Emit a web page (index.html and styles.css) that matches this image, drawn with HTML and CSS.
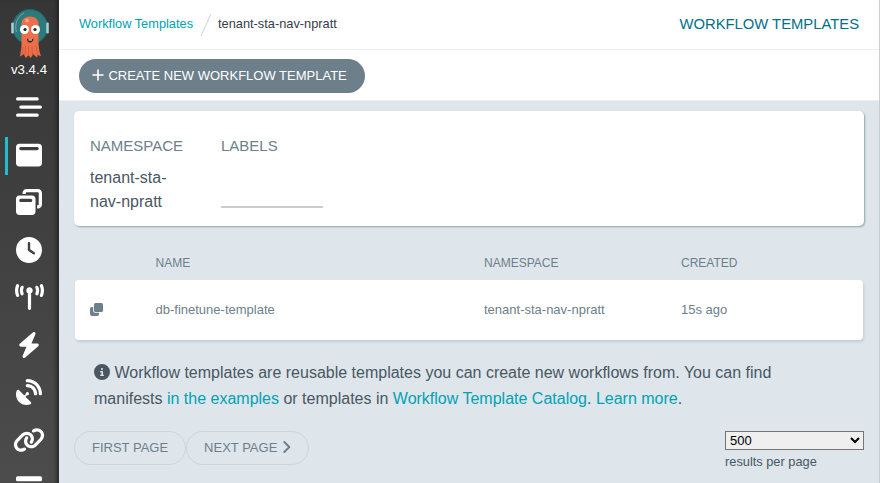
FILE: index.html
```html
<!DOCTYPE html>
<html lang="en">
<head>
<meta charset="utf-8">
<title>Workflow Templates</title>
<link rel="stylesheet" href="styles.css">
</head>
<body>
<div class="layout">
  <nav class="nav">
    <div class="brand">
      <svg class="logo" viewBox="0 0 40 52">
        <circle cx="20" cy="19" r="17.500" fill="#2c7a7c" stroke="#206569"/>
        <rect x="1.200" y="14.500" width="2.600" height="11" rx="1" fill="#a9cbd8"/>
        <rect x="36.200" y="14.500" width="2.600" height="11" rx="1" fill="#a9cbd8"/>
        <path d="M6.500 24C4 16 8 8 14 5" fill="none" stroke="#6ba6a6" stroke-width="1"/>
        <path d="M11.500 20C10.500 12 14 8.500 20 8.500S29.500 12 28.500 20L28.500 36C29 42 29.500 44 31 47.500C29.500 48 28 47.500 27.500 46L27.500 49.500L25 48L23.500 46L20.500 50L18.500 47L16 50L14.500 48L14 46L10 48.500C10.500 44 11.500 41 11.500 36Z" fill="#ec6f4a"/>
        <path d="M13 39L12 46M15.500 38L15 47M18.500 38V48M22 38L22.500 47M26 37L27 46" stroke="#c9583a" stroke-width=".7"/>
        <circle cx="17" cy="12.500" r="2" fill="#f7a184"/>
        <circle cx="14.500" cy="21.500" r="4.500" fill="#fff"/><circle cx="25.500" cy="21.500" r="4.500" fill="#fff"/>
        <circle cx="15" cy="21.500" r="1.600" fill="#222"/><circle cx="25" cy="21.500" r="1.600" fill="#222"/>
        <path d="M17 30.500Q20 32.500 23.500 30.500Q23 34.500 20 34.500T17 30.500Z" fill="#3b1c1a"/>
        <path d="M18.500 31.500H22V32.500H18.500Z" fill="#fff"/>
      </svg>
      <div class="version">v3.4.4</div>
    </div>
    <div class="nav-item"><svg class="icon" viewBox="0 0 512 512"><path d="M32 96H416M96 256H480M32 416H416" fill="none" stroke="#fff" stroke-width="64" stroke-linecap="round"/></svg></div>
    <div class="nav-item active"><svg class="icon" viewBox="0 0 512 512"><path d="M64 32C28.700 32 0 60.700 0 96V416c0 35.300 28.700 64 64 64H448c35.300 0 64-28.700 64-64V96c0-35.300-28.700-64-64-64H64zM96 96H416c17.700 0 32 14.300 32 32s-14.300 32-32 32H96c-17.700 0-32-14.300-32-32s14.300-32 32-32z" fill-rule="evenodd"/></svg></div>
    <div class="nav-item"><svg class="icon" viewBox="0 0 512 512"><path fill-rule="evenodd" d="M432 64H208c-8.800 0-16 7.200-16 16V96H128V80c0-44.200 35.800-80 80-80H432c44.200 0 80 35.800 80 80V304c0 44.200-35.800 80-80 80H416V320h16c8.800 0 16-7.200 16-16V80c0-8.800-7.200-16-16-16zM0 192c0-35.300 28.700-64 64-64H320c35.300 0 64 28.700 64 64V448c0 35.300-28.700 64-64 64H64c-35.300 0-64-28.700-64-64V192zm64 32c0 17.700 14.300 32 32 32H288c17.700 0 32-14.300 32-32s-14.300-32-32-32H96c-17.700 0-32 14.300-32 32z"/></svg></div>
    <div class="nav-item"><svg class="icon" viewBox="0 0 512 512"><path fill-rule="evenodd" d="M256 0a256 256 0 1 1 0 512A256 256 0 1 1 256 0zM232 120V256c0 8 4 15.500 10.700 20l96 64c11 7.400 25.900 4.400 33.300-6.700s4.400-25.900-6.700-33.300L280 243.200V120c0-13.300-10.700-24-24-24s-24 10.700-24 24z"/></svg></div>
    <div class="nav-item"><svg class="icon wide" viewBox="0 0 576 512"><path d="M80.300 44C69.800 69.900 64 98.200 64 128s5.800 58.100 16.300 84c6.600 16.400-1.300 35-17.700 41.700s-35-1.300-41.700-17.700C7.400 202.600 0 166.100 0 128S7.400 53.400 20.900 20C27.600 3.600 46.200-4.300 62.600 2.300S86.900 27.600 80.300 44zM555.100 20C568.600 53.400 576 89.900 576 128s-7.400 74.600-20.900 108c-6.600 16.400-25.300 24.300-41.700 17.700S489.100 228.400 495.700 212c10.500-25.900 16.300-54.200 16.300-84s-5.800-58.100-16.300-84C489.100 27.600 497 9 513.400 2.300s35 1.300 41.700 17.700zM352 128c0 23.700-12.900 44.400-32 55.400V480c0 17.700-14.300 32-32 32s-32-14.300-32-32V183.400c-19.100-11.100-32-31.700-32-55.400c0-35.300 28.700-64 64-64s64 28.700 64 64zM170.600 76.800C163.800 92.400 160 109.700 160 128s3.800 35.600 10.600 51.200c7.100 16.200-.3 35.100-16.500 42.100s-35.100-.3-42.100-16.500c-10.300-23.600-16-49.600-16-76.800s5.700-53.200 16-76.800c7.100-16.200 25.900-23.600 42.100-16.500s23.600 25.900 16.500 42.100zM464 51.200c10.300 23.600 16 49.600 16 76.800s-5.700 53.200-16 76.800c-7.100 16.200-25.900 23.600-42.100 16.500s-23.600-25.900-16.500-42.100c6.800-15.600 10.600-32.900 10.600-51.200s-3.800-35.600-10.600-51.200c-7.100-16.200 .3-35.100 16.500-42.100s35.100 .3 42.100 16.500z"/></svg></div>
    <div class="nav-item"><svg class="icon" viewBox="-32 0 512 512"><path d="M349.400 44.600c5.900-13.700 1.500-29.700-10.600-38.500s-28.600-8-39.900 1.800l-256 224c-10 8.800-13.600 22.900-8.900 35.300S50.700 288 64 288H175.500L98.600 467.400c-5.900 13.700-1.500 29.700 10.600 38.500s28.600 8 39.900-1.800l256-224c10-8.800 13.600-22.900 8.900-35.300s-16.600-20.700-30-20.700H272.500L349.400 44.600z"/></svg></div>
    <div class="nav-item"><svg class="icon" viewBox="0 0 512 512"><path d="M192 32c0-17.700 14.300-32 32-32C383.100 0 512 128.900 512 288c0 17.700-14.300 32-32 32s-32-14.300-32-32C448 164.300 347.700 64 224 64c-17.700 0-32-14.300-32-32zM60.600 220.600L164.700 324.700l28.400-28.400c-.7-2.600-1.100-5.400-1.100-8.300c0-17.700 14.300-32 32-32s32 14.300 32 32s-14.300 32-32 32c-2.900 0-5.600-.4-8.300-1.100l-28.400 28.400L291.400 451.400c14.500 14.500 11.800 38.800-7.300 46.300C260.500 506.900 234.900 512 208 512C93.100 512 0 418.900 0 304c0-26.900 5.100-52.500 14.400-76.100c7.500-19 31.800-21.800 46.300-7.300zM224 96c106 0 192 86 192 192c0 17.700-14.300 32-32 32s-32-14.300-32-32c0-70.700-57.300-128-128-128c-17.700 0-32-14.300-32-32s14.300-32 32-32z"/></svg></div>
    <div class="nav-item"><svg class="icon wider" viewBox="0 0 640 512"><path d="M579.800 267.700c56.500-56.500 56.500-148 0-204.500c-50-50-128.800-56.500-186.300-15.400l-1.600 1.100c-14.400 10.300-17.700 30.300-7.400 44.600s30.300 17.700 44.600 7.400l1.600-1.100c32.100-22.900 76-19.300 103.800 8.600c31.500 31.500 31.500 82.500 0 114L422.300 334.800c-31.500 31.500-82.500 31.500-114 0c-27.900-27.900-31.500-71.800-8.600-103.800l1.100-1.600c10.300-14.400 6.900-34.400-7.400-44.600s-34.400-6.900-44.600 7.400l-1.100 1.600C206.500 251.200 213 330 263 380c56.500 56.500 148 56.500 204.500 0L579.800 267.700zM60.200 244.300c-56.500 56.500-56.500 148 0 204.500c50 50 128.800 56.500 186.300 15.400l1.600-1.100c14.400-10.300 17.700-30.300 7.400-44.600s-30.300-17.700-44.600-7.400l-1.600 1.100c-32.100 22.900-76 19.300-103.800-8.600C74 372 74 321 105.500 289.500L217.700 177.200c31.500-31.500 82.500-31.500 114 0c27.900 27.900 31.500 71.800 8.600 103.900l-1.100 1.600c-10.300 14.400-6.900 34.400 7.400 44.600s34.400 6.900 44.600-7.400l1.100-1.600C433.500 260.800 427 182 377 132c-56.500-56.500-148-56.500-204.500 0L60.200 244.300z"/></svg></div>
    <div class="nav-item"><svg class="icon" viewBox="0 0 26 26"><rect y="2.200" width="26" height="5" rx="1.500"/></svg></div>
  </nav>

  <main class="page">
    <header class="topbar">
      <div class="crumbs">
        <a>Workflow Templates</a>
        <svg class="slash" viewBox="0 0 12 24"><path d="M1 23L11 1" stroke="#cbd3da" fill="none"/></svg>
        <span>tenant-sta-nav-npratt</span>
      </div>
      <div class="title">WORKFLOW TEMPLATES</div>
    </header>
    <div class="actions">
      <button class="create"><svg class="plus" viewBox="0 0 12 12"><path d="M6 1V11M1 6H11" stroke="#fff" stroke-width="1.600" stroke-linecap="round"/></svg>CREATE NEW WORKFLOW TEMPLATE</button>
    </div>

    <div class="content">
      <section class="filters">
        <div class="filter"><p class="label">NAMESPACE</p><div class="value">tenant-sta-nav-npratt</div></div>
        <div class="filter"><p class="label">LABELS</p><div class="input"></div></div>
      </section>

      <section class="table">
        <div class="row head"><span></span><span>NAME</span><span>NAMESPACE</span><span>CREATED</span></div>
        <div class="row item">
          <span class="cell-icon"><svg class="clone" viewBox="0 0 13 13"><path d="M3.200 4H2A2 2 0 0 0 0 6v5a2 2 0 0 0 2 2h5a2 2 0 0 0 2-2V9.800H5.200a2 2 0 0 1-2-2Z"/><rect x="4" width="9" height="9" rx="1.600"/></svg></span>
          <span>db-finetune-template</span><span>tenant-sta-nav-npratt</span><span>15s ago</span>
        </div>
      </section>

      <p class="hint"><svg class="info" viewBox="0 0 512 512"><path fill-rule="evenodd" d="M256 512A256 256 0 1 0 256 0a256 256 0 1 0 0 512zM216 336h24V272H216c-13.300 0-24-10.700-24-24s10.700-24 24-24h48c13.300 0 24 10.700 24 24v88h8c13.300 0 24 10.700 24 24s-10.700 24-24 24H216c-13.300 0-24-10.700-24-24s10.700-24 24-24zm40-208a32 32 0 1 1 0 64 32 32 0 1 1 0-64z"/></svg> Workflow templates are reusable templates you can create new workflows from. You can find manifests <a>in the examples</a> or templates in <a>Workflow Template Catalog</a>. <a>Learn more</a>.</p>

      <footer class="pager">
        <div class="pages">
          <button class="outline">FIRST PAGE</button><button class="outline">NEXT PAGE<svg class="chevron" viewBox="0 0 8 12"><path d="M1.300 1L6.300 6L1.300 11" fill="none" stroke="#6d7f8b" stroke-width="1.900" stroke-linecap="round" stroke-linejoin="round"/></svg></button>
        </div>
        <div class="limit"><select><option>500</option></select><div>results per page</div></div>
      </footer>
    </div>
  </main>
</div>
</body>
</html>
```
FILE: styles.css
```css
* { box-sizing: border-box; }
body { margin: 0; height: 483px; overflow: hidden; background: #dee6eb; color: #495763; font-family: "Liberation Sans", Arial, sans-serif; font-size: 16px; }
a { color: #00a2b3; }
p { margin: 0; }
button { font-family: inherit; }
.layout { display: flex; height: 483px; overflow: hidden; }

.nav { flex: none; width: 59px; height: 483px; overflow: hidden; background: linear-gradient(#363636, #4c4c4c); box-shadow: inset -5px 0 4px -3px #222; }
.brand { height: 83.5px; padding-top: 8px; text-align: center; }
.logo { display: block; width: 40px; height: 52px; margin: 0 auto; }
.version { color: #fff; font-size: 13.3px; line-height: 16px; margin-top: 2px; padding-right: 1px; }
.nav-item { display: flex; align-items: center; justify-content: center; height: 47.5px; padding-right: 1px; position: relative; }
.icon { width: 26px; height: 26px; fill: #fff; flex: none; }
.icon.wide { width: 29px; }
.icon.wider { width: 32px; }
.nav-item.active::before { content: ""; position: absolute; left: 5px; top: 6px; width: 3px; height: 38px; background: #1fbdd0; }

.page { flex: 1; min-width: 0; border-right: 1px solid #c8d0d7; }
.topbar { display: flex; justify-content: space-between; align-items: center; height: 50px; padding: 0 20px; background: #fff; border-bottom: 1px solid #eee; }
.crumbs { display: flex; align-items: center; font-size: 12.8px; color: #363c4a; padding-bottom: 1px; }
.crumbs > :not(svg) { padding-bottom: 1px; }
.slash { width: 12px; height: 24px; margin: 2px 6px 0 7px; }
.title { color: #006f8a; font-size: 14.8px; padding-bottom: 1px; }
.actions { height: 51px; padding: 9px 20px 0; background: #fff; border-bottom: 1px solid #eee; }
.create { display: flex; align-items: center; width: 286px; height: 34px; padding: 0 0 2px 13px; border: 0; border-radius: 17px; background: #6d7f8b; color: #fff; font-size: 13px; white-space: nowrap; }
.plus { width: 12px; height: 12px; margin-right: 4.4px; }

.content { padding: 10px 15px 0; }
.filters { display: flex; height: 115px; padding: 26px 16px 0; background: #fff; border-radius: 5px; box-shadow: 1px 1px 2px #8fa4b1; }
.filter { width: 131px; padding-right: 29px; }
.label { font-size: 15px; line-height: 17px; color: #6d7f8b; }
.value { margin-top: 12px; line-height: 24px; }
.input { height: 54px; border-bottom: 2px solid #ccc; }

.row { display: grid; grid-template-columns: 65.5px 328.5px 197px 1fr; align-items: center; margin: 0 1px; padding: 0 15px; color: #6d7f8b; }
.head { height: 54px; padding-top: 19px; font-size: 12px; }
.item { height: 60px; padding-bottom: 2px; font-size: 13px; background: #fff; border-radius: 4px; box-shadow: 1px 2px 3px #c3cdd4; }
.cell-icon { display: flex; }
.clone { width: 13px; height: 13px; fill: #6d7f8b; }

.hint { padding: 20px 60px 0 20px; line-height: 26px; }
.info { width: 16px; height: 16px; fill: #495763; vertical-align: -2px; }
.pager { display: flex; justify-content: space-between; padding-top: 19px; }
.pages { display: flex; }
.outline { display: flex; align-items: center; height: 34px; padding: 0 17px 2px; border: 1px solid #ccd6dd; border-radius: 17px; background: transparent; color: #6d7f8b; font-size: 13px; }
.chevron { width: 8px; height: 12px; margin-left: 6px; }
.limit { width: 139px; font-size: 12.8px; }
.limit select { display: block; width: 139px; height: 19px; padding: 0; border: 1px solid #767676; border-radius: 0; background-color: #efefef; color: #000; font: 13px "Liberation Sans", Arial, sans-serif; }
.limit div { margin-top: 4px; line-height: 16px; }
```
